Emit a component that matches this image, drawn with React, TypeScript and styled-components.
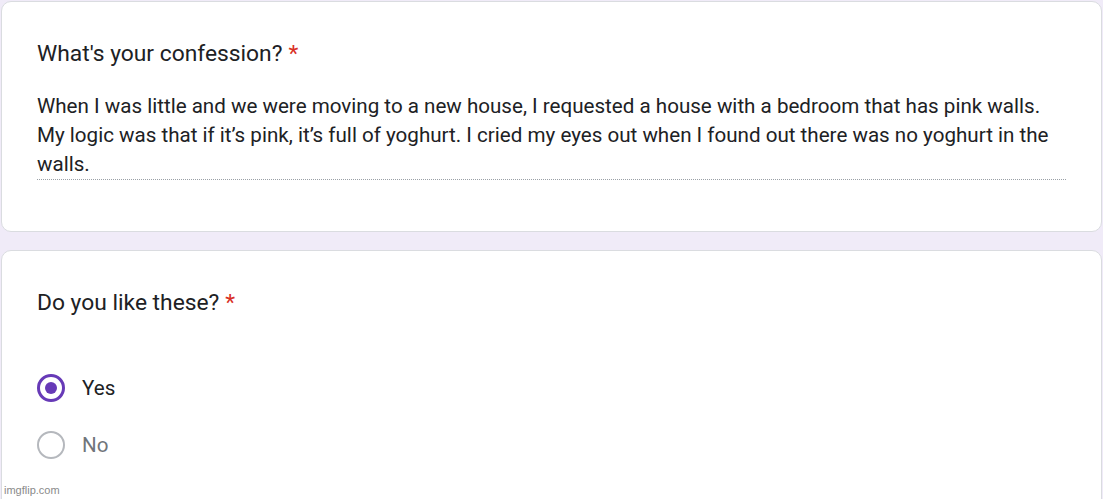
import React from 'react'
import styled, { createGlobalStyle } from 'styled-components'

const GlobalStyle = createGlobalStyle`
  html, body {
    margin: 0;
    padding: 0;
    background: #f0ebf8;
    font-family: Roboto, 'Noto Sans', Arial, sans-serif;
    overflow: hidden;
    height: 499px;
  }
`

const Page = styled.div`
  position: relative;
  height: 499px;
  overflow: hidden;
  padding: 1px 1px 0 1px;
  display: flex;
  flex-direction: column;
  gap: 18px;
  box-sizing: border-box;
`

const Card = styled.div<{ open?: boolean }>`
  flex-shrink: 0;
  background: #fff;
  border: 1px solid #dadce0;
  border-radius: 10px;
  padding: 38px 35px ${({ open }) => (open ? '120px' : '51px')};
`

const Question = styled.div`
  font-size: 22.8px;
  line-height: 28px;
  color: #202124;
`

const Star = styled.span`
  color: #d93025;
  margin-left: 6px;
`

const Answer = styled.div`
  margin-top: 24px;
  font-size: 20.6px;
  line-height: 29px;
  color: #202124;
  border-bottom: 1px dotted #9aa0a6;
`

const Options = styled.div`
  margin-top: 57px;
  display: flex;
  flex-direction: column;
  gap: 29px;
`

const Option = styled.label`
  display: flex;
  align-items: center;
  gap: 17px;
  height: 28px;
`

const Radio = styled.span<{ checked?: boolean }>`
  width: 28px;
  height: 28px;
  box-sizing: border-box;
  border-radius: 50%;
  border: ${({ checked }) => (checked ? '3px solid #673ab7' : '2.5px solid #b5b8bd')};
  display: flex;
  align-items: center;
  justify-content: center;
  &::after {
    content: '';
    display: ${({ checked }) => (checked ? 'block' : 'none')};
    width: 12px;
    height: 12px;
    border-radius: 50%;
    background: #673ab7;
  }
`

const OptionText = styled.span<{ checked?: boolean }>`
  font-size: 20.6px;
  color: ${({ checked }) => (checked ? '#202124' : '#70757a')};
`

const Watermark = styled.div`
  position: absolute;
  left: 4px;
  bottom: 3px;
  font-family: 'Liberation Sans', Arial, sans-serif;
  font-size: 11px;
  color: #8a8a8a;
`

const App: React.FC = () => {
  return (
    <>
      <GlobalStyle />
      <Page>
        <Card>
          <Question>
            What's your confession?<Star>*</Star>
          </Question>
          <Answer>
            When I was little and we were moving to a new house, I requested a house with a bedroom that has pink walls.
            My logic was that if it’s pink, it’s full of yoghurt. I cried my eyes out when I found out there was no yoghurt in the
            walls.
          </Answer>
        </Card>
        <Card open>
          <Question>
            Do you like these?<Star>*</Star>
          </Question>
          <Options>
            <Option>
              <Radio checked />
              <OptionText checked>Yes</OptionText>
            </Option>
            <Option>
              <Radio />
              <OptionText>No</OptionText>
            </Option>
          </Options>
        </Card>
        <Watermark>imgflip.com</Watermark>
      </Page>
    </>
  )
}

export default App
